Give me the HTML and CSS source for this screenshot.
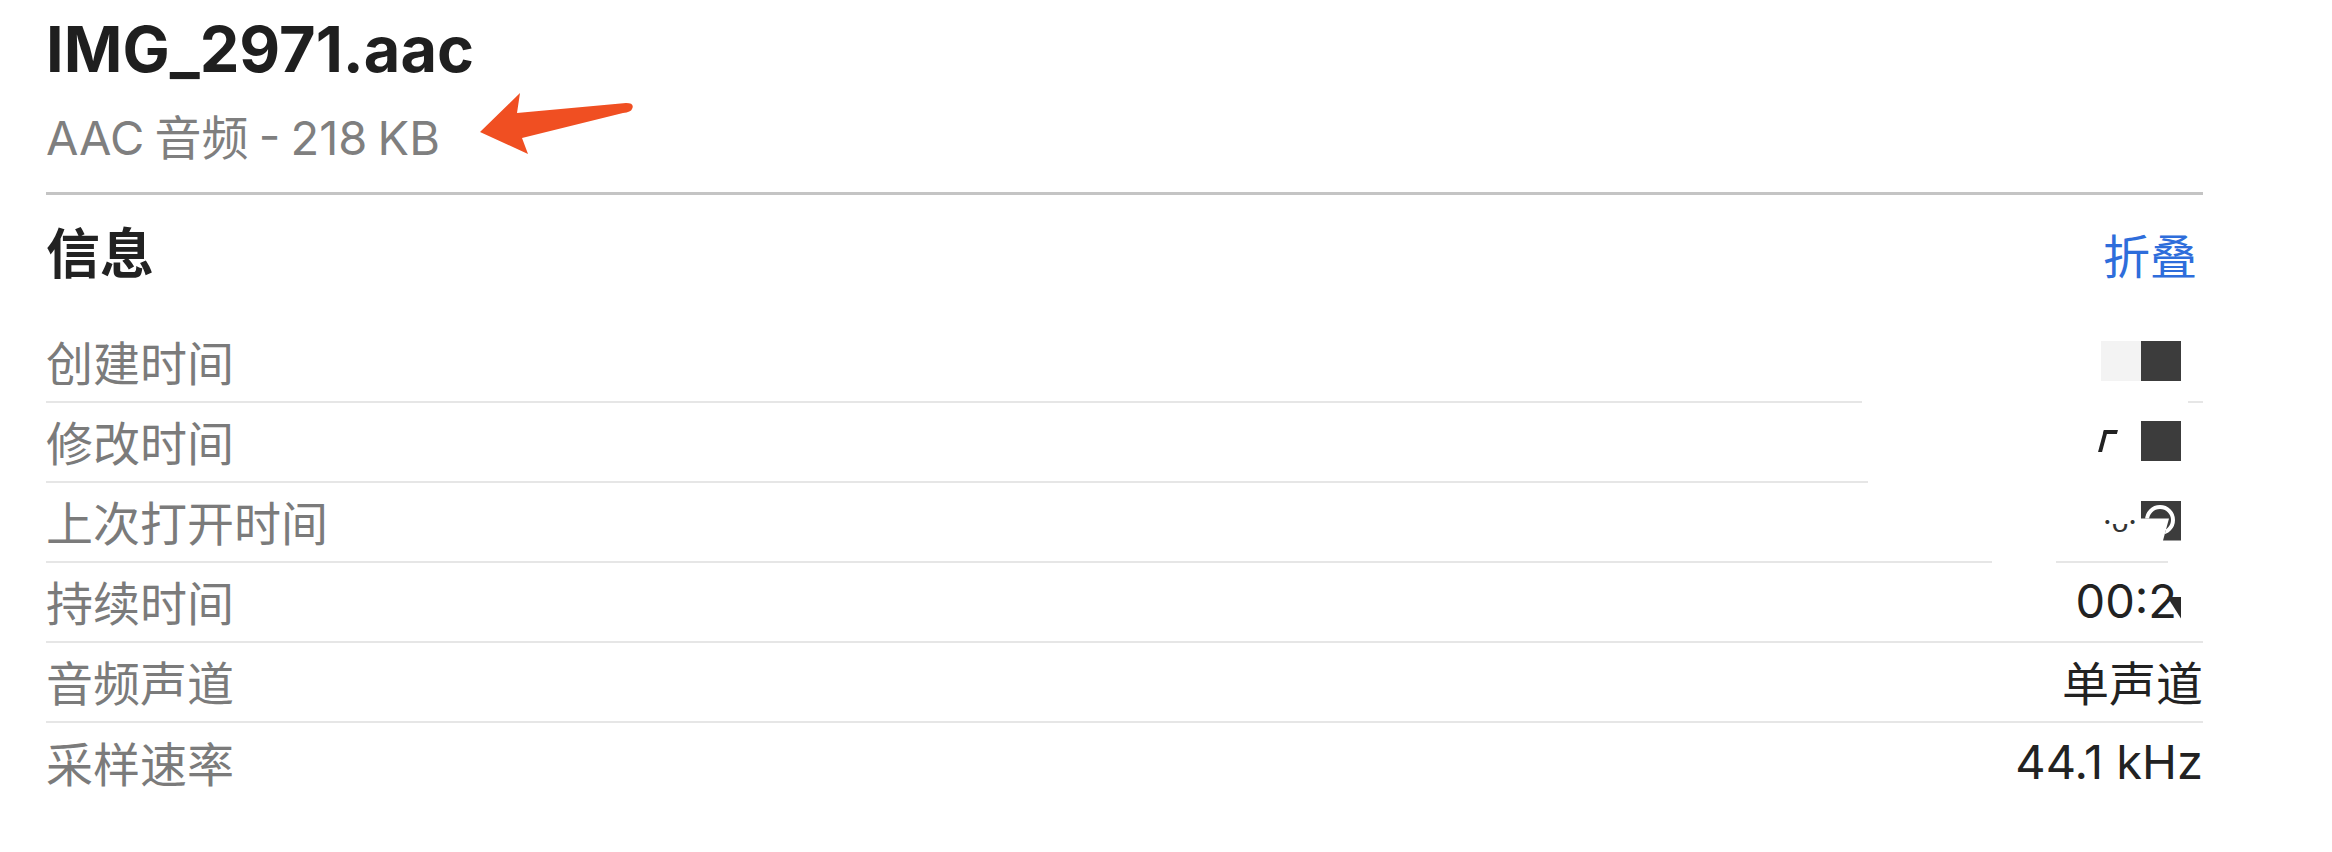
FILE: index.html
```html
<!DOCTYPE html>
<html lang="zh-CN">
<head>
  <meta charset="UTF-8">
  <title>IMG_2971.aac 简介</title>
  <link rel="stylesheet" href="styles.css">
</head>
<body>

  <div class="panel">
    <header class="file-head">
      <h1 class="file-name">IMG_2971.aac</h1>
      <p class="file-kind">AAC 音频 - 218 KB</p>
      <svg class="arrow" width="160" height="72" viewBox="0 0 160 72">
        <path d="M4 44 L44 5 L41 25 L150 15 Q159 15 156 21 Q155 24 147 25 L46 50 L52 66 Z" fill="#f04f22"/>
      </svg>
    </header>

    <section class="info">
      <div class="info-head">
        <h2>信息</h2>
        <a href="#">折叠</a>
      </div>

      <ul class="info-list">
        <li class="row">
          <span class="label">创建时间</span>
          <span class="value">
            <i class="blot blot-light"></i><i class="blot"></i>
          </span>
          <i class="mask mask-1"></i>
        </li>
        <li class="row">
          <span class="label">修改时间</span>
          <span class="value">
            <i class="speck"></i><i class="blot"></i>
          </span>
          <i class="mask mask-2"></i>
        </li>
        <li class="row">
          <span class="label">上次打开时间</span>
          <span class="value">
            <span class="faded">·ᴗ·</span><i class="blot blot-cut"></i>
          </span>
          <i class="mask mask-3a"></i>
          <i class="mask mask-3b"></i>
        </li>
        <li class="row">
          <span class="label">持续时间</span>
          <span class="value value-cut">00:2<i class="corner"></i></span>
        </li>
        <li class="row">
          <span class="label">音频声道</span>
          <span class="value">单声道</span>
        </li>
        <li class="row row-last">
          <span class="label">采样速率</span>
          <span class="value">44.1 kHz</span>
        </li>
      </ul>
    </section>
  </div>

</body>
</html>
```

FILE: styles.css
```css
* {
  margin: 0;
  padding: 0;
  box-sizing: border-box;
}

body {
  background: #fff;
  font-family: "Inter", "Noto Sans CJK SC", sans-serif;
  color: #1f1f1f;
}

.panel {
  width: 2203px;
  padding-left: 46px;
}

/* File header */
.file-head {
  position: relative;
  padding-top: 11px;
  padding-bottom: 26px;
  border-bottom: 3px solid #c4c4c4;
}

.file-name {
  font-size: 63px;
  line-height: 76px;
  font-weight: 700;
  color: #1f1f1f;
}

.file-kind {
  margin-top: 22px;
  font-size: 47px;
  line-height: 57px;
  font-weight: 400;
  color: #7f7f7f;
  word-spacing: -3px;
}

.arrow {
  position: absolute;
  left: 430px;
  top: 88px;
}

/* Info section */
.info-head {
  display: flex;
  justify-content: space-between;
  align-items: baseline;
  padding-top: 24px;
  height: 128px;
}

.info-head h2 {
  font-family: "Noto Sans CJK SC", sans-serif;
  font-size: 54px;
  line-height: 64px;
  font-weight: 700;
  color: #222;
}

.info-head a {
  font-family: "Noto Sans CJK SC", sans-serif;
  font-size: 47px;
  line-height: 64px;
  color: #2e6ddb;
  text-decoration: none;
  margin-right: 6px;
}

.info-list {
  list-style: none;
}

.row {
  position: relative;
  display: flex;
  justify-content: space-between;
  align-items: center;
  height: 80px;
  padding-bottom: 3px;
  border-bottom: 2px solid #e6e6e6;
}

.row-last {
  border-bottom: none;
}

.label {
  font-family: "Noto Sans CJK SC", sans-serif;
  font-size: 47px;
  color: #7b7b7b;
}

.value {
  display: flex;
  align-items: center;
  font-size: 47px;
  color: #222;
}

/* Redacted values */
.blot {
  display: block;
  width: 40px;
  height: 40px;
  margin-right: 22px;
  background: #3c3c3c;
}

.blot-light {
  background: #f3f3f3;
  margin-right: 0;
}

.blot-cut {
  position: relative;
  clip-path: polygon(0 0, 100% 0, 100% 100%, 55% 100%, 70% 45%, 0 45%);
}

.blot-cut::after {
  content: "";
  position: absolute;
  left: 4px;
  top: 4px;
  width: 22px;
  height: 22px;
  border: 4px solid #fff;
  border-radius: 50%;
}

.faded {
  font-size: 30px;
  color: #333;
  margin-right: 4px;
}

.speck {
  display: block;
  width: 14px;
  height: 22px;
  margin-right: 26px;
  border-top: 4px solid #222;
  border-left: 4px solid #222;
  transform: skewX(-15deg);
}

.value-cut {
  margin-right: 22px;
}

.corner {
  display: block;
  width: 14px;
  height: 22px;
  margin-left: -10px;
  margin-top: 14px;
  background: #2a2a2a;
  clip-path: polygon(0 0, 100% 0, 100% 100%);
}

/* white-out over parts of the separators */
.mask {
  position: absolute;
  bottom: -2px;
  height: 2px;
  background: #fff;
}

.mask-1 {
  left: 1816px;
  width: 326px;
}

.mask-2 {
  left: 1822px;
  width: 335px;
}

.mask-3a {
  left: 1946px;
  width: 64px;
}

.mask-3b {
  left: 2122px;
  width: 35px;
}
```
